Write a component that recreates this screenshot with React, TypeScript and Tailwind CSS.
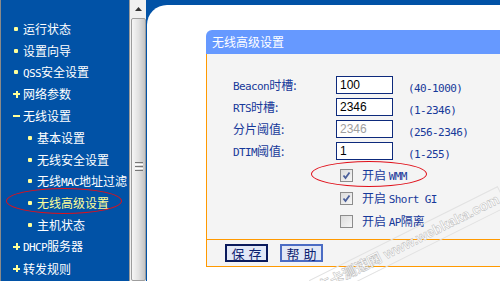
import React from "react";

const M = ({ children }: { children: React.ReactNode }) => (
  <span className="font-['DejaVu_Sans_Mono',monospace] text-[11px] tracking-[-0.6px]">{children}</span>
);

type Item = { t: React.ReactNode; k: "dot" | "plus" | "minus"; sub?: boolean; active?: boolean };

const items: Item[] = [
  { t: "运行状态", k: "dot" },
  { t: "设置向导", k: "dot" },
  { t: <><M>QSS</M>安全设置</>, k: "dot" },
  { t: "网络参数", k: "plus" },
  { t: "无线设置", k: "minus" },
  { t: "基本设置", k: "dot", sub: true },
  { t: "无线安全设置", k: "dot", sub: true },
  { t: <>无线<M>MAC</M>地址过滤</>, k: "dot", sub: true },
  { t: "无线高级设置", k: "dot", sub: true, active: true },
  { t: "主机状态", k: "dot", sub: true },
  { t: <><M>DHCP</M>服务器</>, k: "plus" },
  { t: "转发规则", k: "plus" },
];

function Bullet({ k }: { k: Item["k"] }) {
  if (k === "dot") return <span className="ml-[1px] w-[4px] h-[4px] rounded-[1px] bg-[#ffff99]" />;
  if (k === "minus") return <span className="w-[7px] h-[2px] bg-[#ffff99]" />;
  return (
    <span className="relative w-[7px] h-[7px]">
      <span className="absolute left-0 top-[2.5px] w-[7px] h-[2px] bg-[#ffff99]" />
      <span className="absolute left-[2.5px] top-0 w-[2px] h-[7px] bg-[#ffff99]" />
    </span>
  );
}

function Check({ on }: { on: boolean }) {
  return (
    <span className="w-[13px] h-[13px] border border-[#8c8c8c] bg-gradient-to-br from-[#dcdcdc] to-[#f6f6f6] flex items-center justify-center">
      {on && (
        <svg width="9" height="9" viewBox="0 0 9 9">
          <path d="M1.5 4.5 L3.5 7 L7.5 1.5" stroke="#4a5f9a" strokeWidth="1.8" fill="none" />
        </svg>
      )}
    </span>
  );
}

export default function App() {
  const label = "w-[103px] text-[12px] text-[#17399a]";
  const input =
    "w-[57px] h-[18px] border border-[#0d2a7c] bg-white text-[12px] font-['Liberation_Sans',sans-serif] pl-[3px] flex items-center";
  const range = "ml-[15px] text-[#17399a]";
  return (
    <div className="relative w-[500px] h-[281px] overflow-hidden flex font-['Noto_Sans_CJK_SC',sans-serif] leading-none">
      {/* sidebar */}
      <div className="w-[129px] h-full bg-[#0152a6] border-l border-[#8a8a8a] pt-[18px] flex flex-col shrink-0">
        {items.map((it, i) => (
          <div
            key={i}
            className={`h-[21.8px] flex items-center whitespace-nowrap text-[12px] ${
              it.sub ? "pl-[26px]" : "pl-[12px]"
            } ${it.active ? "text-[#ffff99]" : "text-white"}`}
          >
            <span className="w-[10px] flex items-center justify-start">
              <Bullet k={it.k} />
            </span>
            <span>{it.t}</span>
          </div>
        ))}
      </div>

      {/* scrollbar */}
      <div className="w-[17px] h-full shrink-0 border-l border-[#9a9a9a] bg-[#f0f0f0] flex flex-col">
        <div className="h-[22px] flex items-center justify-center">
          <svg width="7" height="4" viewBox="0 0 7 4">
            <path d="M0 4 L3.5 0 L7 4 Z" fill="#333" />
          </svg>
        </div>
        <div className="h-[290px] ml-[1px] border border-[#9d9d9d] rounded-[2px] bg-gradient-to-r from-[#f6f6f6] via-[#e2e2e2] to-[#c4c4c4] flex flex-col items-center pt-[143px] gap-[1px]">
          <span className="w-[8px] h-[1px] bg-[#777]" />
          <span className="w-[8px] h-[1px] bg-[#fff]" />
          <span className="w-[8px] h-[1px] bg-[#777]" />
          <span className="w-[8px] h-[1px] bg-[#fff]" />
          <span className="w-[8px] h-[1px] bg-[#777]" />
        </div>
      </div>

      {/* main */}
      <div className="flex-1 h-full bg-[#0152a6] pt-[5px] pl-[1px] flex">
        <div className="flex-1 bg-white rounded-tl-[20px] pl-[59px] pt-[25px]">
          <div className="w-[320px]">
            <div className="h-[24px] bg-[#6699ff] rounded-tl-[6px] text-white text-[12px] flex items-center pl-[6px]">
              无线高级设置
            </div>
            <div className="border-l border-[#ff9900] bg-[#f4f4f4]">
              <div className="pl-[26px] pt-[20px] pb-[6px]">
                <div className="h-[22px] flex items-center">
                  <span className={label}>
                    <M>Beacon</M>时槽:
                  </span>
                  <span className={input}>100</span>
                  <span className={range}>
                    <M>(40-1000)</M>
                  </span>
                </div>
                <div className="h-[22px] flex items-center">
                  <span className={label}>
                    <M>RTS</M>时槽:
                  </span>
                  <span className={input}>2346</span>
                  <span className={range}>
                    <M>(1-2346)</M>
                  </span>
                </div>
                <div className="h-[22px] flex items-center">
                  <span className={label}>分片阈值:</span>
                  <span className={`${input} text-[#a0a0a0]`}>2346</span>
                  <span className={range}>
                    <M>(256-2346)</M>
                  </span>
                </div>
                <div className="h-[22px] flex items-center">
                  <span className={label}>
                    <M>DTIM</M>阈值:
                  </span>
                  <span className={input}>1</span>
                  <span className={range}>
                    <M>(1-255)</M>
                  </span>
                </div>
                <div className="mt-[2px] pl-[107px] text-[12px] text-[#17399a]">
                  <div className="h-[23px] flex items-center gap-[9px]">
                    <Check on />
                    <span>
                      开启 <M>WMM</M>
                    </span>
                  </div>
                  <div className="h-[23px] flex items-center gap-[9px]">
                    <Check on />
                    <span>
                      开启 <M>Short GI</M>
                    </span>
                  </div>
                  <div className="h-[23px] flex items-center gap-[9px]">
                    <Check on={false} />
                    <span>
                      开启 <M>AP</M>隔离
                    </span>
                  </div>
                </div>
              </div>
              <div className="h-[28px] border-t border-b border-[#ff9900] flex items-center pl-[18px] gap-[12px]">
                <span className="w-[43px] h-[18px] border-2 border-[#0a1a5c] bg-[#e2e8f6] text-[13px] text-[#0d2270] flex items-center justify-center tracking-[4px] pl-[4px]">
                  保存
                </span>
                <span className="w-[43px] h-[18px] border-2 border-[#4b6cc4] bg-[#e2e8f6] text-[13px] text-[#0d2270] flex items-center justify-center tracking-[4px] pl-[4px]">
                  帮助
                </span>
              </div>
            </div>
          </div>
        </div>
      </div>

      {/* red ellipses */}
      <div className="absolute left-[6px] top-[188px] w-[116px] h-[26px] rounded-[50%] border-[1.5px] border-[#e0101a]" />
      <div className="absolute left-[311px] top-[161px] w-[116px] h-[26px] rounded-[50%] border-[1.5px] border-[#e0101a]" />

      {/* watermark */}
      <div className="absolute left-[314px] top-[279px] origin-[0_50%] -rotate-[26.5deg] border border-[#e2e2e2] px-[4px] py-[3px] whitespace-nowrap text-[14px] leading-[15px] font-bold text-white [-webkit-text-stroke:0.5px_#bcbcbc] font-['Liberation_Sans','Noto_Sans_CJK_SC',sans-serif]">
        东卡测速网 www.webkaka.com
      </div>
    </div>
  );
}
